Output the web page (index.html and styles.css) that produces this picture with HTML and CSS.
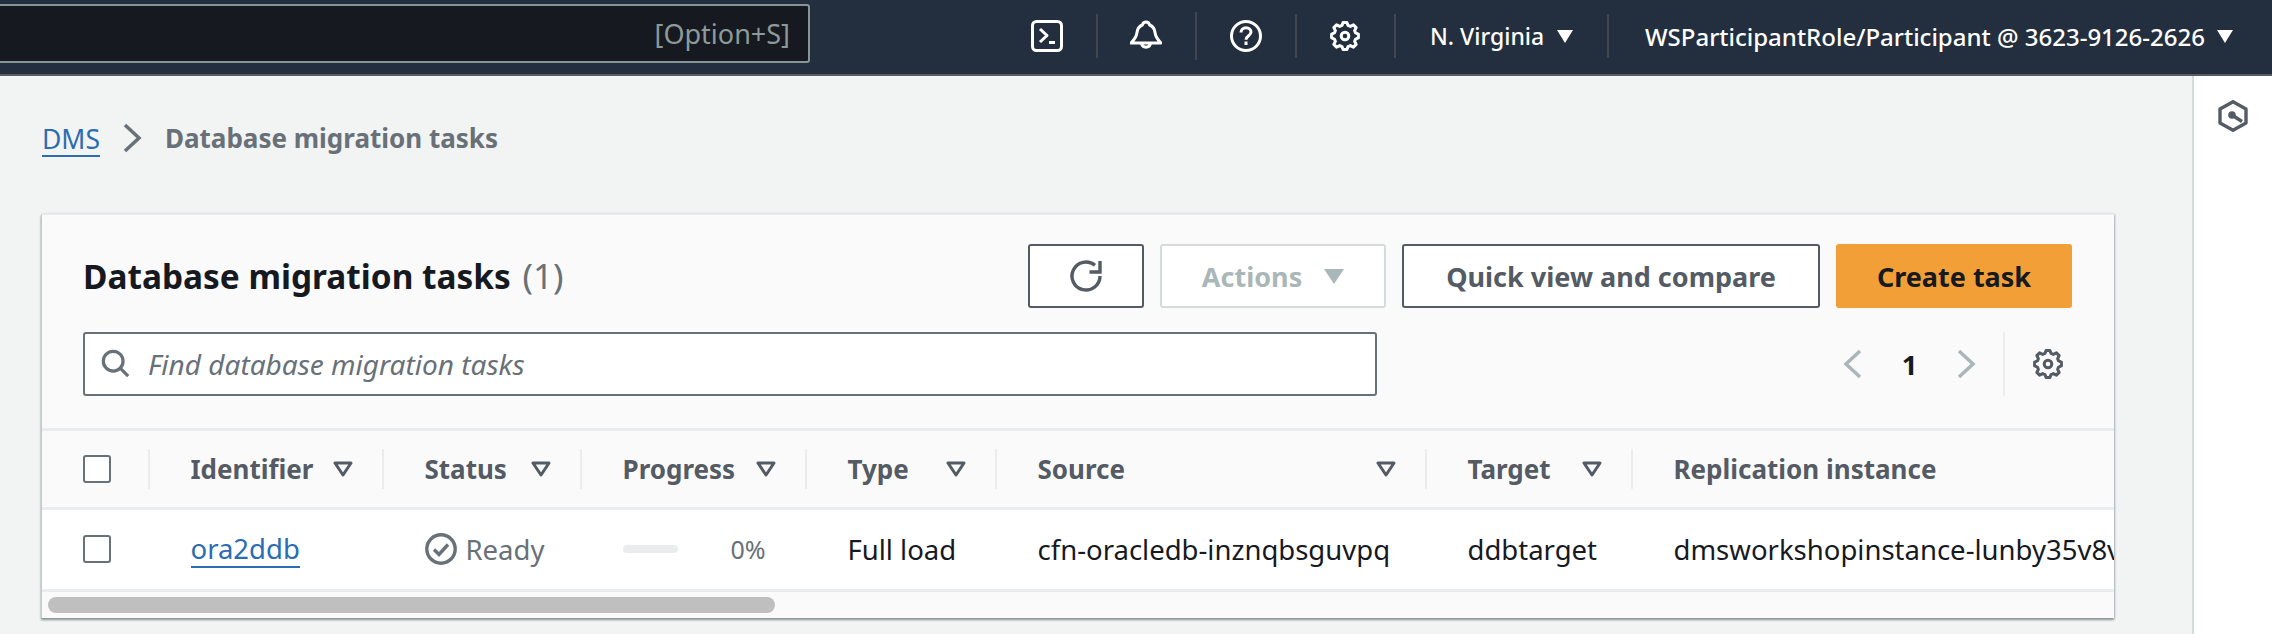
FILE: index.html
```html
<!DOCTYPE html>
<html>
<head>
<meta charset="utf-8">
<title>Database migration tasks</title>
<link rel="stylesheet" href="styles.css">
</head>
<body>

<svg class="defs" width="0" height="0">
  <symbol id="gear" viewBox="-16 -16 32 32">
    <polygon fill="none" stroke="currentColor" stroke-width="3" stroke-linejoin="round" points="13.4,1.95 10.57,3.03 9.62,5.33 11.18,8.43 8.43,11.18 5.33,9.62 3.03,10.57 1.95,13.4 -1.95,13.4 -3.03,10.57 -5.33,9.62 -8.43,11.18 -11.18,8.43 -9.62,5.33 -10.57,3.03 -13.4,1.95 -13.4,-1.95 -10.57,-3.03 -9.62,-5.33 -11.18,-8.43 -8.43,-11.18 -5.33,-9.62 -3.03,-10.57 -1.95,-13.4 1.95,-13.4 3.03,-10.57 5.33,-9.62 8.43,-11.18 11.18,-8.43 9.62,-5.33 10.57,-3.03 13.4,-1.95"/>
    <circle r="3.8" fill="none" stroke="currentColor" stroke-width="3"/>
  </symbol>
  <symbol id="sort" viewBox="0 0 20 16">
    <polygon fill="none" stroke="currentColor" stroke-width="3" stroke-linejoin="round" points="2,2 18,2 10,14"/>
  </symbol>
</svg>

<header class="topbar">
  <div class="global-search"><span class="shortcut">[Option+S]</span></div>
  <div class="nav-icon">
    <svg class="icon" viewBox="0 0 32 32" fill="none" stroke="currentColor" stroke-width="3" stroke-linejoin="round"><rect x="1.500" y="1.500" width="29" height="29" rx="4"/><path d="M9 9l7 6.500-7 6.500"/><path d="M18 22.500h6"/></svg>
  </div>
  <div class="nav-icon nav-icon-tall">
    <svg class="icon" viewBox="0 0 32 32" fill="none" stroke="currentColor" stroke-width="3" stroke-linejoin="round"><path d="M16 2c2 0 3.200 1.300 3.600 3 3.400 1.300 5 4 5.400 7.500.5 4 2.500 7 6 10.500H1c3.500-3.500 5.500-6.500 6-10.500.4-3.500 2-6.200 5.400-7.500.4-1.700 1.600-3 3.600-3z"/><path d="M11.500 23.500a4.600 4.600 0 0 0 9 0"/></svg>
  </div>
  <div class="nav-icon">
    <svg class="icon" viewBox="0 0 32 32" fill="none" stroke="currentColor" stroke-width="3"><circle cx="16" cy="16" r="14.500"/><path d="M11 12.500c0-3 2.300-4.700 5-4.700s5 1.700 5 4.300c0 3.700-5 3.600-5 7.600"/><path d="M16 21.500v3.500"/></svg>
  </div>
  <div class="nav-icon">
    <svg class="icon"><use href="#gear"/></svg>
  </div>
  <div class="nav-menu nav-region">N. Virginia <span class="caret"></span></div>
  <div class="nav-menu nav-account">WSParticipantRole/Participant @ 3623-9126-2626 <span class="caret"></span></div>
</header>

<div class="page">
  <main class="content">
    <nav class="crumbs">
      <a class="crumb-link" href="#">DMS</a>
      <svg class="crumb-sep" viewBox="0 0 20 30" fill="none" stroke="currentColor" stroke-width="3.500"><path d="M3 2l14 13L3 28"/></svg>
      <span class="crumb-here">Database migration tasks</span>
    </nav>

    <section class="card">
      <div class="card-head">
        <div class="title-row">
          <h1 class="card-title">Database migration tasks <span class="count">(1)</span></h1>
          <div class="actions">
            <button class="btn btn-icon">
              <svg class="icon" viewBox="0 0 32 32" fill="none" stroke="currentColor" stroke-width="3.400"><path d="M30 16a14 14 0 1 1-5-10.700"/><path d="M30 1v11H19.500"/></svg>
            </button>
            <button class="btn btn-disabled">Actions <span class="caret"></span></button>
            <button class="btn btn-quick">Quick view and compare</button>
            <button class="btn btn-primary">Create task</button>
          </div>
        </div>
        <div class="filter-row">
          <div class="find">
            <svg class="find-icon" viewBox="0 0 32 32" fill="none" stroke="currentColor" stroke-width="3.400"><circle cx="13" cy="13" r="10.500"/><path d="M20.500 20.500L29 29"/></svg>
            <span class="find-text">Find database migration tasks</span>
          </div>
          <div class="pager">
            <svg class="pager-arrow" viewBox="0 0 20 30" fill="none" stroke="currentColor" stroke-width="3.500"><path d="M17 2L3 15l14 13"/></svg>
            <span class="pager-num">1</span>
            <svg class="pager-arrow" viewBox="0 0 20 30" fill="none" stroke="currentColor" stroke-width="3.500"><path d="M3 2l14 13L3 28"/></svg>
          </div>
          <div class="prefs"><svg class="icon"><use href="#gear"/></svg></div>
        </div>
      </div>

      <div class="table-wrap">
        <table class="tasks">
          <colgroup>
            <col class="c-check"><col class="c-id"><col class="c-status"><col class="c-progress"><col class="c-type"><col class="c-source"><col class="c-target"><col class="c-rep">
          </colgroup>
          <thead>
            <tr>
              <th class="cell-check"><div class="th-in"><span class="box"></span></div></th>
              <th><div class="th-in">Identifier<svg class="sort"><use href="#sort"/></svg></div></th>
              <th><div class="th-in">Status<svg class="sort"><use href="#sort"/></svg></div></th>
              <th><div class="th-in">Progress<svg class="sort"><use href="#sort"/></svg></div></th>
              <th><div class="th-in">Type<svg class="sort"><use href="#sort"/></svg></div></th>
              <th><div class="th-in">Source<svg class="sort"><use href="#sort"/></svg></div></th>
              <th><div class="th-in">Target<svg class="sort"><use href="#sort"/></svg></div></th>
              <th class="th-last"><div class="th-in">Replication instance</div></th>
            </tr>
          </thead>
          <tbody>
            <tr>
              <td class="cell-check"><span class="box"></span></td>
              <td><a class="task-link" href="#">ora2ddb</a></td>
              <td>
                <span class="status">
                  <svg class="status-icon" viewBox="0 0 32 32" fill="none" stroke="currentColor" stroke-width="3.400"><circle cx="16" cy="16" r="14.200"/><path d="M9 16.500l5 5 9-10"/></svg>
                  Ready
                </span>
              </td>
              <td>
                <span class="progress"><span class="bar"></span><span class="pct">0%</span></span>
              </td>
              <td>Full load</td>
              <td>cfn-oracledb-inznqbsguvpq</td>
              <td>ddbtarget</td>
              <td>dmsworkshopinstance-lunby35v8v</td>
            </tr>
          </tbody>
        </table>
        <div class="scroll-track"><div class="scroll-thumb"></div></div>
      </div>
    </section>
  </main>

  <aside class="side">
    <svg class="side-icon" viewBox="0 0 30 32" fill="none" stroke="currentColor" stroke-width="3.400" stroke-linejoin="round"><path d="M15 1.700L28 9v14l-13 7.300L2 23V9z"/><circle cx="14" cy="15" r="3.800" fill="currentColor" stroke="none"/><path d="M14 15l10 6.500"/></svg>
  </aside>
</div>

</body>
</html>
```

FILE: styles.css
```css
* {
    box-sizing: border-box;
}

html, body {
    margin: 0;
    height: 634px;
    overflow: hidden;
}

body {
    font-family: "Noto Sans", "Open Sans", sans-serif;
    font-size: 27.500px;
    color: #16191f;
    background: #f2f3f3;
}

.defs {
    position: absolute;
}

.icon {
    display: block;
    width: 32px;
    height: 32px;
}

/* top bar */
.topbar {
    display: flex;
    align-items: center;
    height: 76px;
    padding-bottom: 2px;
    background: #232f3e;
    border-bottom: 2px solid #545b64;
    color: #fff;
}

.global-search {
    display: flex;
    align-items: center;
    justify-content: flex-end;
    width: 820px;
    height: 59px;
    margin-left: -10px;
    margin-right: auto;
    padding-right: 18px;
    background: #16191f;
    border: 2px solid #879596;
    border-radius: 3px;
    align-self: flex-start;
    margin-top: 4px;
}

.shortcut {
    font-size: 27px;
    color: #8d9a9b;
}

.nav-icon {
    display: flex;
    align-items: center;
    justify-content: center;
    width: 99.500px;
    height: 44px;
    border-right: 2px solid #414750;
}

.nav-icon-tall {
    height: 48px;
}

.nav-menu {
    display: flex;
    align-items: center;
    height: 44px;
    font-size: 24px;
    font-weight: 500;
    white-space: nowrap;
}

.nav-region {
    width: 213px;
    padding-left: 34px;
    font-size: 23px;
    border-right: 2px solid #414750;
    gap: 13px;
}

.nav-account {
    width: 663px;
    padding-left: 36px;
    gap: 12px;
}

.caret {
    display: inline-block;
    width: 0;
    height: 0;
    border-left: 8.500px solid transparent;
    border-right: 8.500px solid transparent;
    border-top: 13px solid currentColor;
}

/* page */
.page {
    display: flex;
    height: 558px;
}

.content {
    flex: 1;
    padding: 0 78px 0 41px;
}

.side {
    width: 81px;
    padding: 24px 0 0 24px;
    background: #fff;
    border-left: 2px solid #d5dbdb;
}

.side-icon {
    display: block;
    width: 30px;
    height: 32px;
    color: #545b64;
}

.crumbs {
    display: flex;
    align-items: center;
    height: 40px;
    margin: 42px 0 0 1px;
}

.crumb-link {
    color: #2b6cb3;
    font-size: 26.500px;
    text-decoration: none;
    border-bottom: 2px solid #2b6cb3;
    line-height: 32px;
    margin-top: 4px;
}

.crumb-sep {
    width: 20px;
    height: 30px;
    margin: 0 23px 0 22px;
    color: #687078;
}

.crumb-here {
    font-size: 26px;
    font-weight: 700;
    color: #687078;
}

/* card */
.card {
    height: 404px;
    margin-top: 56px;
    background: #fafafa;
    border-left: 1px solid #c4c9cc;
    box-shadow: 0 2px 2px #879596, 1px 0 2px #c4c9cc;
    border-top: 1px solid #eaeded;
}

.card-head {
    height: 216px;
    padding: 29px 42px 0 41px;
    border-bottom: 3px solid #eaeded;
}

.title-row {
    display: flex;
    align-items: center;
    justify-content: space-between;
    height: 64px;
}

.card-title {
    margin: 0;
    font-size: 33.400px;
    font-weight: 700;
    line-height: 60px;
}

.count {
    margin-left: 3px;
    font-size: 35px;
    font-weight: 400;
    color: #687078;
}

.actions {
    display: flex;
    gap: 16px;
}

.btn {
    display: flex;
    align-items: center;
    justify-content: center;
    height: 64px;
    padding: 0;
    font-family: inherit;
    font-size: 27px;
    font-weight: 700;
    color: #545b64;
    background: #fff;
    border: 2px solid #545b64;
    border-radius: 3px;
}

.btn-icon {
    width: 116px;
}

.btn-disabled {
    width: 226px;
    gap: 22px;
    color: #aab7b8;
    border-color: #d5dbdb;
}

.btn-disabled .caret {
    border-left-width: 10px;
    border-right-width: 10px;
    border-top-width: 15px;
}

.btn-quick {
    width: 418px;
}

.btn-primary {
    width: 236px;
    color: #16191f;
    background: #f29f38;
    border-color: #f29f38;
}

.filter-row {
    display: flex;
    align-items: center;
    margin-top: 24px;
}

.find {
    display: flex;
    align-items: center;
    width: 1294px;
    height: 64px;
    padding-left: 16px;
    background: #fff;
    border: 2px solid #687078;
    border-radius: 3px;
}

.find-icon {
    width: 30px;
    height: 30px;
    color: #687078;
}

.find-text {
    margin-left: 17px;
    font-size: 28px;
    font-style: italic;
    color: #687078;
}

.pager {
    display: flex;
    align-items: center;
    margin-left: 466px;
}

.pager-arrow {
    width: 20px;
    height: 30px;
    color: #aab7b8;
}

.pager-num {
    width: 93px;
    text-align: center;
    font-weight: 700;
}

.prefs {
    height: 64px;
    margin-left: 27px;
    padding: 16px 0 0 27px;
    border-left: 2px solid #eaeded;
    color: #545b64;
}

/* table */
.table-wrap {
    position: relative;
    overflow: hidden;
}

.tasks {
    width: 2072px;
    table-layout: fixed;
    border-collapse: collapse;
}

.c-check { width: 108px; }
.c-id { width: 234px; }
.c-status { width: 198px; }
.c-progress { width: 225px; }
.c-type { width: 190px; }
.c-source { width: 430px; }
.c-target { width: 206px; }
.c-rep { width: 481px; }

.tasks th {
    height: 77px;
    padding: 0;
    text-align: left;
    font-size: 26px;
    font-weight: 700;
    color: #545b64;
    background: #fafafa;
    border-bottom: 3px solid #eaeded;
}

.th-in {
    display: flex;
    align-items: center;
    justify-content: space-between;
    height: 40px;
    padding: 0 29px 0 40.500px;
    border-right: 2px solid #eaeded;
}

.th-last .th-in {
    border-right: 0;
}

.cell-check .th-in {
    padding: 0 0 0 41px;
}

.sort {
    width: 20px;
    height: 16px;
}

.tasks td {
    height: 82px;
    padding: 0 0 0 40.500px;
    white-space: nowrap;
    overflow: hidden;
    background: #fff;
    border-bottom: 3px solid #eaeded;
}

.tasks td.cell-check {
    padding-left: 41px;
}

.box {
    display: block;
    width: 28px;
    height: 28px;
    background: #fff;
    border: 2px solid #687078;
    border-radius: 3px;
}

.task-link {
    display: inline-block;
    line-height: 34px;
    color: #2b6cb3;
    text-decoration: none;
    border-bottom: 2px solid #2b6cb3;
}

.status {
    display: flex;
    align-items: center;
    gap: 9px;
    color: #687078;
}

.status-icon {
    width: 32px;
    height: 32px;
}

.progress {
    display: flex;
    align-items: center;
}

.bar {
    width: 55px;
    height: 8px;
    background: #eaeded;
    border-radius: 4px;
}

.pct {
    margin-left: 53px;
    font-size: 25px;
    color: #687078;
}

.scroll-track {
    height: 27px;
    padding: 5px 0 0 6px;
}

.scroll-thumb {
    width: 727px;
    height: 16px;
    background: #bfbfbf;
    border-radius: 8px;
}
```
